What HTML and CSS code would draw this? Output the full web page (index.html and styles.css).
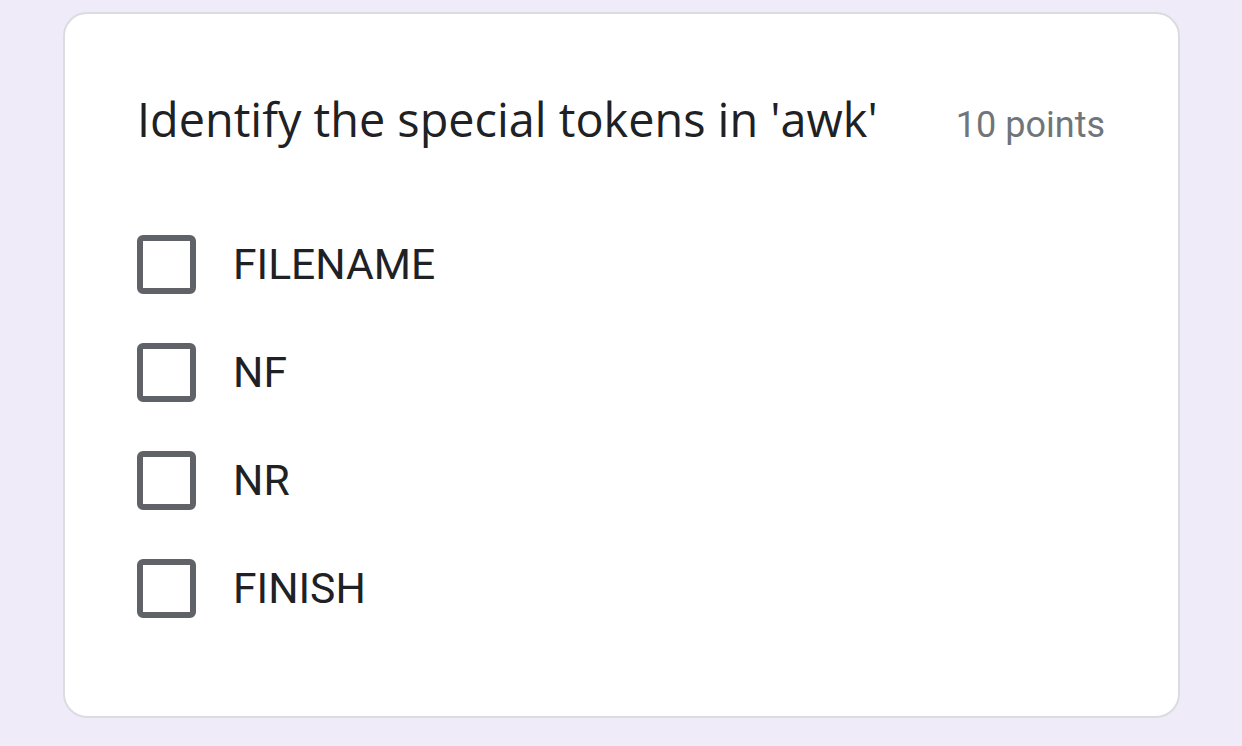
FILE: index.html
```html
<!DOCTYPE html>
<html>
<head>
<meta charset="utf-8">
<link rel="stylesheet" href="styles.css">
</head>
<body>
<div class="card">
  <div class="header">
    <div class="title">Identify the special tokens in 'awk'</div>
    <div class="points">10 points</div>
  </div>
  <div class="options">
    <div class="option"><span class="box"></span><span class="label">FILENAME</span></div>
    <div class="option"><span class="box"></span><span class="label">NF</span></div>
    <div class="option"><span class="box"></span><span class="label">NR</span></div>
    <div class="option"><span class="box"></span><span class="label">FINISH</span></div>
  </div>
</div>
</body>
</html>
```
FILE: styles.css
```css
html, body {
  margin: 0;
  padding: 0;
  background: #f0ebf8;
  height: 100%;
}
body {
  padding-top: 12px;
  box-sizing: border-box;
}
.card {
  margin: 0 0 0 63px;
  width: 1117px;
  height: 706px;
  box-sizing: border-box;
  background: #fff;
  border: 2px solid #dadce0;
  border-radius: 24px;
  padding: 0 73px 0 72px;
}
.header {
  display: flex;
  justify-content: space-between;
  align-items: baseline;
  padding-top: 77px;
}
.title {
  font-family: "Open Sans", sans-serif;
  font-size: 46.8px;
  line-height: 56px;
  color: #202124;
}
.points {
  font-family: Roboto, sans-serif;
  font-size: 36px;
  color: #70757a;
}
.options {
  display: flex;
  flex-direction: column;
  padding-top: 63px;
}
.option {
  display: flex;
  align-items: center;
  height: 108px;
  gap: 37px;
}
.box {
  width: 59px;
  height: 59px;
  box-sizing: border-box;
  border: 6px solid #5f6368;
  border-radius: 6px;
  flex: none;
}
.label {
  font-family: Roboto, sans-serif;
  font-size: 42.6px;
  color: #202124;
}
```
